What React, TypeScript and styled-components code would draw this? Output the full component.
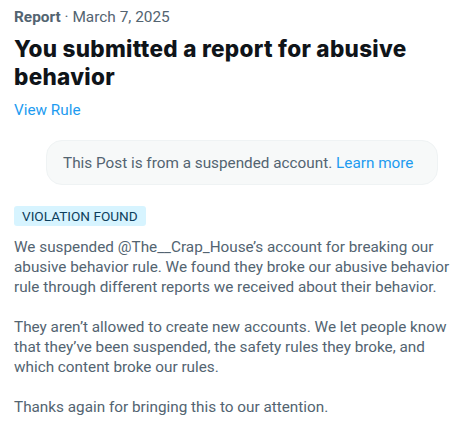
import styled, { createGlobalStyle } from 'styled-components'

const GlobalStyle = createGlobalStyle`
  body {
    margin: 0;
    background: #ffffff;
    font-family: Roboto, 'Noto Sans', sans-serif;
    color: #0f1419;
  }
`

const Page = styled.div`
  padding: 7px 6px 16px 14px;
  width: 467px;
  box-sizing: border-box;
`

const Meta = styled.div`
  font-size: 15.4px;
  line-height: 20px;
  color: #536471;
`

const MetaLabel = styled.span`
  font-weight: 700;
`

const Title = styled.h1`
  margin: 8px 0 0 0;
  font-family: Inter, Roboto, sans-serif;
  font-size: 22.5px;
  letter-spacing: 0.3px;
  line-height: 28px;
  font-weight: 800;
  color: #0f1419;
`

const Link = styled.a`
  color: #1d9bf0;
  text-decoration: none;
  cursor: pointer;
`

const RuleLink = styled(Link)`
  display: block;
  margin-top: 9px;
  font-size: 15.3px;
  line-height: 20px;
`

const Notice = styled.div`
  margin: 20px 23px 0 32px;
  padding: 12px 16px 11px 16px;
  background: #f7f9f9;
  border: 1px solid #eff3f4;
  border-radius: 16px;
  font-size: 15.3px;
  line-height: 20px;
  color: #536471;
`

const Badge = styled.span`
  display: inline-block;
  margin-top: 21px;
  padding: 0 8px;
  background: #d7f4ff;
  border-radius: 3px;
  font-size: 13.6px;
  line-height: 20px;
  color: #0d3e5c;
`

const Body = styled.div`
  margin-top: 11px;
  display: flex;
  flex-direction: column;
  gap: 20px;
`

const Paragraph = styled.p`
  margin: 0;
  font-size: 15.3px;
  line-height: 20px;
  color: #536471;
`

export default function App() {
  return (
    <>
      <GlobalStyle />
      <Page>
        <Meta>
          <MetaLabel>Report</MetaLabel> · March 7, 2025
        </Meta>
        <Title>You submitted a report for abusive behavior</Title>
        <RuleLink>View Rule</RuleLink>
        <Notice>
          This Post is from a suspended account. <Link>Learn more</Link>
        </Notice>
        <Badge>VIOLATION FOUND</Badge>
        <Body>
          <Paragraph>
            We suspended @The__Crap_House’s account for breaking our abusive behavior rule. We found
            they broke our abusive behavior rule through different reports we received about their
            behavior.
          </Paragraph>
          <Paragraph>
            They aren’t allowed to create new accounts. We let people know that they’ve been
            suspended, the safety rules they broke, and which content broke our rules.
          </Paragraph>
          <Paragraph>Thanks again for bringing this to our attention.</Paragraph>
        </Body>
      </Page>
    </>
  )
}
